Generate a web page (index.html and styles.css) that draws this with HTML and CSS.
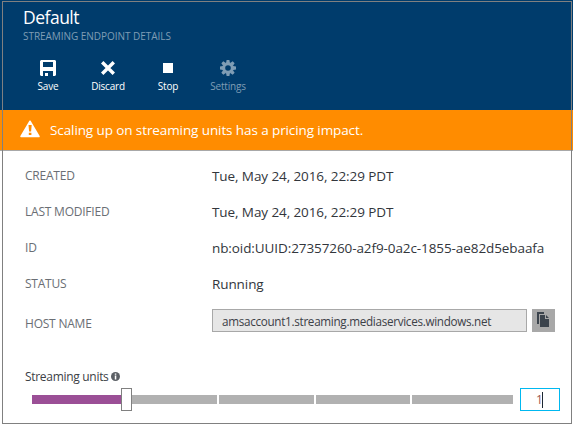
FILE: index.html
```html
<!DOCTYPE html>
<html lang="en">
<head>
<meta charset="utf-8">
<title>Default - Streaming endpoint details</title>
<link rel="stylesheet" href="styles.css">
</head>
<body>
<main class="blade">
  <header class="header">
    <h1 class="title">Default</h1>
    <div class="subtitle">STREAMING ENDPOINT DETAILS</div>
    <nav class="toolbar">
      <button class="command">
        <svg width="16" height="16" viewBox="0 0 16 16"><path fill="#fff" fill-rule="evenodd" d="M1 0h14l1 1v14l-1 1h-2v-5H8v5H5v-5H3v5H1l-1-1V1zM3 2v5h10V2z"/><path fill="#003c6c" d="M5 11h3v2H5z"/></svg>
        <span>Save</span>
      </button>
      <button class="command">
        <svg width="16" height="16" viewBox="0 0 16 16"><path stroke="#fff" stroke-width="3.4" d="M2.200 2.200l11.600 11.600M13.800 2.200L2.200 13.800"/></svg>
        <span>Discard</span>
      </button>
      <button class="command">
        <svg width="16" height="16" viewBox="0 0 16 16"><path fill="#fff" d="M3 3h10v10H3z"/></svg>
        <span>Stop</span>
      </button>
      <button class="command disabled">
        <svg width="16" height="16" viewBox="0 0 16 16"><g fill="#7f9db5"><path fill-rule="evenodd" d="M8 2.200a5.800 5.800 0 1 0 0 11.600A5.800 5.800 0 0 0 8 2.200zm0 3a2.800 2.800 0 1 1 0 5.600a2.800 2.800 0 0 1 0-5.600z"/><path d="M6.600 0h2.800l.5 3H6.100zM6.600 16h2.800l.5-3H6.100zM0 6.600v2.800l3 .5V6.100zM16 6.600v2.800l-3 .5V6.100z"/><path transform="rotate(45 8 8)" d="M6.600 0h2.800l.5 3H6.100zM6.600 16h2.800l.5-3H6.100zM0 6.600v2.800l3 .5V6.100zM16 6.600v2.800l-3 .5V6.100z"/></g></svg>
        <span>Settings</span>
      </button>
    </nav>
  </header>
  <div class="banner">
    <svg width="20" height="18" viewBox="0 0 20 18"><path fill="#fff" stroke="#fff" stroke-width="1.500" stroke-linejoin="round" d="M10 1.200L19 16.500H1z"/><path fill="#ff8c00" d="M8.500 5h3.200l-.6 6.500H9.100zM8.800 12.800h2.600v2.200H8.800z"/></svg>
    <span>Scaling up on streaming units has a pricing impact.</span>
  </div>
  <dl class="details">
    <dt>CREATED</dt><dd>Tue, May 24, 2016, 22:29 PDT</dd>
    <dt>LAST MODIFIED</dt><dd>Tue, May 24, 2016, 22:29 PDT</dd>
    <dt>ID</dt><dd>nb:oid:UUID:27357260-a2f9-0a2c-1855-ae82d5ebaafa</dd>
    <dt>STATUS</dt><dd>Running</dd>
  </dl>
  <div class="host">
    <div class="host-label">HOST NAME</div>
    <div class="host-input">amsaccount1.streaming.mediaservices.windows.net</div>
    <button class="copy" aria-label="Copy">
      <svg width="13" height="15" viewBox="0 0 13 15"><path fill="#3b434c" d="M0 0h7v2H2v10H0zM3 3h5v4h4v8H3zM9 3l3 3H9z"/></svg>
    </button>
  </div>
  <section class="units">
    <div class="units-label">
      <span>Streaming units</span>
      <svg width="9" height="9" viewBox="0 0 9 9"><circle cx="4.500" cy="4.500" r="4.500" fill="#5c6066"/><path fill="#fff" d="M3.800 1.500h1.500v1.300H3.800zM3.800 3.600h1.500v3.900H3.800z"/></svg>
    </div>
    <div class="control">
      <div class="slider">
        <i class="filled"></i><i class="thumb"></i><i class="rest"></i><i></i><i></i><i></i>
      </div>
      <div class="value"><span>1</span><i class="caret"></i></div>
    </div>
  </section>
</main>
</body>
</html>
```
FILE: styles.css
```css
* { box-sizing: border-box; }
body { margin: 0; font-family: "Open Sans", "Noto Sans", sans-serif; background: #fff; }
.blade { position: relative; width: 573px; height: 425px; overflow: hidden; }
.blade::after {
  content: ""; position: absolute; inset: 1px 1px 1px 2px;
  border: 1px solid #808080; pointer-events: none;
}
button { font: inherit; border: 0; padding: 0; background: none; }
.header { height: 110px; padding: 5px 0 0 23px; background: #003c6c; color: #fff; }
.title { margin: 0; font-size: 17.5px; line-height: 24px; font-weight: 400; letter-spacing: -0.5px; }
.subtitle { margin-top: 1px; font-size: 10px; line-height: 13px; color: #7f9db5; letter-spacing: -0.04px; }
.toolbar { display: flex; margin: 17px 0 0 -5px; }
.command {
  width: 60px; display: flex; flex-direction: column; align-items: center; gap: 3px;
  color: #fff; font-size: 10px; line-height: 14px; font-weight: 500;
}
.command span { letter-spacing: -0.2px; }
.command.disabled { color: #7f9db5; }
.banner {
  display: flex; align-items: center; gap: 10px; height: 41px; padding-left: 20px;
  background: #ff8c00; border-bottom: 1px solid #a8a8a8; color: #fff;
  font-size: 13.5px; line-height: 20px; letter-spacing: -0.1px;
}
.banner svg { position: relative; top: -1px; }
.details {
  display: grid; grid-template-columns: 187px 1fr; grid-auto-rows: 36px;
  margin: 7px 0 0; padding-left: 25px; line-height: 36px;
}
dt, .host-label { font-size: 12px; color: #6a6e74; letter-spacing: -0.22px; }
dd { margin: 0; font-size: 13.5px; color: #32363c; letter-spacing: -0.09px; }
.host { display: flex; align-items: center; height: 23px; margin-top: 7px; padding-left: 25px; }
.host-label { width: 187px; padding-top: 5px; }
.host-input {
  width: 315px; height: 23px; padding-left: 9px; border: 1px solid #a8a8a8;
  background: #e6e6e6; color: #3c4046; font-size: 11.7px; line-height: 22px; letter-spacing: -0.3px;
}
.copy {
  display: flex; align-items: center; justify-content: center;
  width: 23px; height: 23px; margin-left: 5px; background: #a8a8a8;
}
.copy svg { margin: -2px 1px 0 0; }
.units { padding: 35px 0 0 25px; }
.units-label {
  display: flex; align-items: center; gap: 2px; height: 18px;
  font-size: 12px; color: #3c4046; letter-spacing: -0.3px;
}
.control { display: flex; align-items: center; margin: 3px 0 0 7px; }
.slider { display: flex; align-items: center; width: 481px; gap: 2px; }
.slider i { flex: none; height: 9px; width: 95px; background: #b1b1b1; }
.slider .filled { width: 89px; background: #9b4f96; }
.slider .thumb { width: 11px; height: 23px; margin: 0 -2px; background: #fff; border: 1px solid #808080; }
.slider .rest { width: 85px; }
.slider i:nth-child(5) { width: 94px; }
.slider i:last-child { width: 101px; }
.value {
  display: flex; align-items: center; justify-content: center; width: 40px; height: 23px;
  margin-left: 7px; padding-right: 1px; border: 1px solid #00b8f0; color: #9a5650; font-size: 12px;
}
.value span { margin-right: -1px; }
.caret { width: 1px; height: 16px; background: #1c2733; }
```
